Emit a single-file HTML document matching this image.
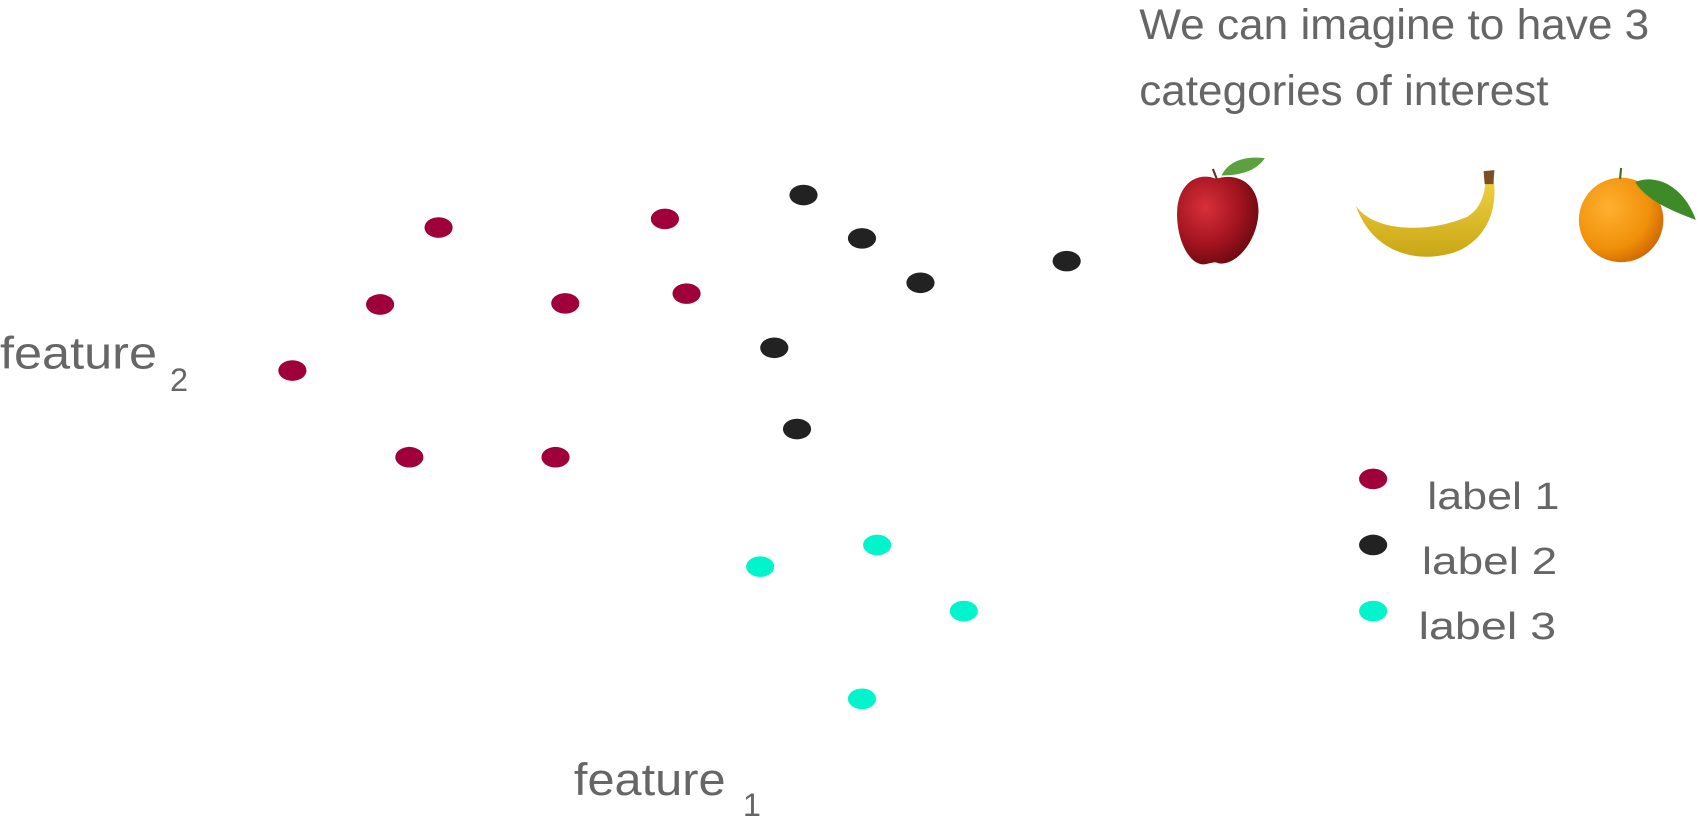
<!DOCTYPE html>
<html><head><meta charset="utf-8"><style>
html,body{margin:0;padding:0;background:#fff;}
svg{display:block}
text{font-family:"Liberation Sans",sans-serif;fill:#666}
</style></head><body>
<svg width="1698" height="818" viewBox="0 0 1568 755" preserveAspectRatio="none" xmlns="http://www.w3.org/2000/svg">
<defs>
<radialGradient id="ap" cx="0.35" cy="0.35" r="0.7"><stop offset="0" stop-color="#d8303a"/><stop offset="0.6" stop-color="#a3141f"/><stop offset="1" stop-color="#6a0a12"/></radialGradient>
<radialGradient id="or" cx="0.35" cy="0.35" r="0.7"><stop offset="0" stop-color="#ffb030"/><stop offset="0.7" stop-color="#f0900a"/><stop offset="1" stop-color="#d06a00"/></radialGradient>
<linearGradient id="bn" x1="0" y1="0" x2="0" y2="1"><stop offset="0" stop-color="#f3d64a"/><stop offset="1" stop-color="#c9a614"/></linearGradient>
</defs>
<text x="1052" y="36" font-size="39" textLength="471" lengthAdjust="spacingAndGlyphs">We can imagine to have 3</text>
<text x="1052" y="97" font-size="39" textLength="378" lengthAdjust="spacingAndGlyphs">categories of interest</text>

<!-- apple -->
<path d="M1123 165 C1105 158 1088 170 1087 195 C1086 220 1098 245 1112 244 C1118 243 1122 241 1125 243 C1140 246 1160 225 1162 198 C1164 172 1145 158 1123 165 Z" fill="url(#ap)"/>
<path d="M1124 166 L1120 156" stroke="#5a3a20" stroke-width="2"/>
<path d="M1128 162 C1135 148 1150 144 1168 146 C1160 158 1145 162 1128 162 Z" fill="#5da040"/>
<!-- banana -->
<path d="M1252 190 C1270 215 1320 215 1355 200 C1368 192 1372 178 1372 160 L1378 158 C1384 185 1378 215 1350 230 C1320 244 1270 240 1252 190 Z" fill="url(#bn)"/>
<path d="M1370 158 L1380 157 L1379 170 L1371 170 Z" fill="#7a5020"/>
<!-- orange -->
<ellipse cx="1497" cy="203" rx="39" ry="39" fill="url(#or)"/>
<path d="M1496 165 L1497 155" stroke="#4a7020" stroke-width="2"/>
<path d="M1510 168 C1530 160 1555 172 1566 203 C1545 195 1520 185 1510 168 Z" fill="#3f8a28"/>

<g fill="#a0003a">
<ellipse cx="405" cy="210" rx="13" ry="9.5"/><ellipse cx="614" cy="202" rx="13" ry="9.5"/>
<ellipse cx="351" cy="281" rx="13" ry="9.5"/><ellipse cx="522" cy="280" rx="13" ry="9.5"/>
<ellipse cx="634" cy="271" rx="13" ry="9.5"/><ellipse cx="270" cy="342" rx="13" ry="9.5"/>
<ellipse cx="378" cy="422" rx="13" ry="9.5"/><ellipse cx="513" cy="422" rx="13" ry="9.5"/>
<ellipse cx="1268" cy="442" rx="13" ry="9.5"/>
</g>
<g fill="#222">
<ellipse cx="742" cy="180" rx="13" ry="9.5"/><ellipse cx="796" cy="220" rx="13" ry="9.5"/>
<ellipse cx="850" cy="261" rx="13" ry="9.5"/><ellipse cx="985" cy="241" rx="13" ry="9.5"/>
<ellipse cx="715" cy="321" rx="13" ry="9.5"/><ellipse cx="736" cy="396" rx="13" ry="9.5"/>
<ellipse cx="1268" cy="503" rx="13" ry="9.5"/>
</g>
<g fill="#00f5cc">
<ellipse cx="702" cy="523" rx="13" ry="9.5"/><ellipse cx="810" cy="503" rx="13" ry="9.5"/>
<ellipse cx="890" cy="564" rx="13" ry="9.5"/><ellipse cx="796" cy="645" rx="13" ry="9.5"/>
<ellipse cx="1268" cy="564" rx="13" ry="9.5"/>
</g>

<text x="1318" y="470" font-size="35" textLength="122" lengthAdjust="spacingAndGlyphs">label 1</text>
<text x="1313" y="530" font-size="35" textLength="125" lengthAdjust="spacingAndGlyphs">label 2</text>
<text x="1310" y="590" font-size="35" textLength="127" lengthAdjust="spacingAndGlyphs">label 3</text>

<text x="0" y="340" font-size="42" textLength="145" lengthAdjust="spacingAndGlyphs">feature</text>
<text x="157" y="361" font-size="30">2</text>
<text x="530" y="734" font-size="42" textLength="140" lengthAdjust="spacingAndGlyphs">feature</text>
<text x="686" y="753" font-size="30">1</text>
</svg>
</body></html>
